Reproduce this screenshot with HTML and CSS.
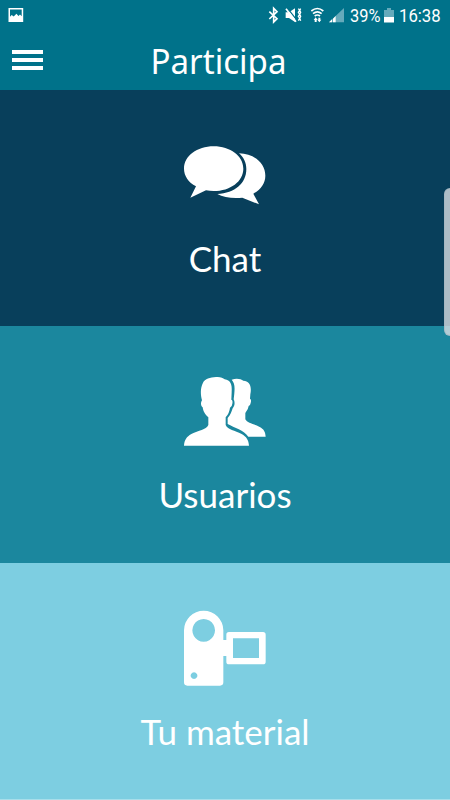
FILE: index.html
```html
<!DOCTYPE html>
<html lang="es">
<head>
<meta charset="utf-8">
<title>Participa</title>
<link rel="stylesheet" href="styles.css">
</head>
<body>
<header class="top">
  <div class="status">
    <svg class="photo" width="16" height="16" viewBox="0 0 16 16"><path fill="#fff" fill-rule="evenodd" d="M.5 1h14.700v14H.5zM2 2.500v7.200l1.700-1.600 2 1.500L8.400 6.700l2.100 2.200 1.500-1.500 1.700 1.800V2.500z"/></svg>
    <div class="indicators">
      <svg width="120" height="34" viewBox="0 0 360 102">
        <path fill="none" stroke="#fff" stroke-width="5" d="M28 35 51 56 41 66V25l10 10-23 22"/>
        <path fill="#fff" d="M77 37h10l18-12v41L87 54H77z"/>
        <path stroke="#00728a" stroke-width="4" d="m81 23 30 38"/>
        <path stroke="#fff" stroke-width="5" d="m78 26 30 39"/>
        <path fill="none" stroke="#fff" stroke-width="4" d="M115 26l4 5-4 6 4 6-4 6 4 6-4 7M122 26l-3 5 3 6-3 6 3 6-3 6 3 7"/>
        <path fill="none" stroke="#fff" stroke-width="5" d="M154 33q18-15 36 0M159 41q13-11 26 0M164 48q8-6 16 0"/>
        <path fill="#fff" d="m161 60 6-8 6 8zM172 59h12l-6 8zM164 59h6v7h-6zM175 53h6v7h-6z"/>
        <path fill="#65aabb" d="M252 24v43h-45z"/>
        <path fill="#fff" d="M207 67 216 58v9zM219 56l8-8v19h-8z"/>
      </svg>
      <span class="percent">39%</span>
      <svg class="battery" width="10" height="16" viewBox="0 0 10 16"><path fill="#65aabb" d="M3 0h4v2h3v8H0V2h3z"/><path fill="#fff" d="M0 9h10v5.500H0z"/></svg>
      <span class="clock">16:38</span>
    </div>
  </div>
  <div class="bar">
    <div class="menu"><i></i><i></i><i></i></div>
    <h1>Participa</h1>
  </div>
</header>
<main>
  <section class="tile chat">
    <svg width="110" height="80" viewBox="0 0 330 240" fill="#fff">
      <path d="M131 34C181 34 220 63 220 101S181 168 131 168Q119 168 108 166L61 188 78 154C55 142 42 122 42 101 42 63 81 34 131 34Z"/>
      <path d="M207 55C253 56 286 85 286 122 286 145 272 164 250 176L267 208 217 188C188 190 160 188 142 177 195 174 229 145 229 102 229 83 221 67 207 55Z"/>
    </svg>
    <h2>Chat</h2>
  </section>
  <section class="tile users">
    <svg width="110" height="90" viewBox="0 0 330 270" fill="#fff">
      <path d="M138 36C151 35 159 38 164 43 181 46 187 57 185 82L184 104Q189 106 187 116 186 126 180 128 178 145 167 157V180C174 195 194 196 215 207 229 215 236 225 237 242H42C43 225 50 215 64 207 86 196 108 195 115 180V157C103 146 100 139 98 127 93 124 91 113 96 106 92 90 90 70 99 53 105 41 120 37 138 36Z"/>
      <path d="M185 44C198 39 213 41 220 47 238 48 246 62 241 88L240 101Q245 103 242 114 241 121 236 123 235 133 226 144V163C232 175 251 176 269 186 281 192 286 200 287 215H235C222 196 193 188 173 177V159C182 150 185 138 188 130 195 122 195 110 191 103 194 75 197 57 185 44Z"/>
    </svg>
    <h2>Usuarios</h2>
  </section>
  <section class="tile material">
    <svg width="110" height="95" viewBox="0 0 330 285" fill="#fff" fill-rule="evenodd">
      <path d="M101 32A59 59 0 0 1 160 91V120H169V104Q169 96 177 96H279Q287 96 287 104V185Q287 193 279 193H177Q169 193 169 185V168H160V247Q160 257 150 257H52Q42 257 42 247V91A59 59 0 0 1 101 32ZM101 57a34 34 0 1 0 .1 0ZM72 217a10 10 0 1 0 .1 0ZM189 115V174H267V115Z"/>
    </svg>
    <h2>Tu material</h2>
  </section>
</main>
<div class="edge"></div>
</body>
</html>
```
FILE: styles.css
```css
* { box-sizing: border-box; }
body { margin: 0; width: 450px; height: 800px; overflow: hidden; position: relative; background: #a8deea; color: #fff; }
svg { display: block; flex: none; }
h1, h2 { margin: 0; font-weight: 400; white-space: nowrap; }
.top { height: 90px; background: #00728a; }
.status { height: 34px; display: flex; justify-content: space-between; padding-left: 8px; }
.photo { margin-top: 7px; }
.indicators { display: flex; width: 190px; font: 18px/32px Roboto, sans-serif; }
.indicators svg:first-child { margin-right: -30px; }
.percent { width: 34px; transform: scaleX(.91); transform-origin: left; }
.battery { margin-top: 8px; }
.clock { margin-left: 5px; transform: scaleX(.93); transform-origin: left; }
.bar { height: 56px; display: grid; grid-template-columns: 62px 1fr 75px; }
.menu { display: flex; flex-direction: column; gap: 4px; padding: 16px 0 0 12px; }
.menu i { width: 31px; height: 4px; background: #fff; }
h1 { font: 400 35px/54px "Noto Sans", sans-serif; text-align: center; transform: scaleX(.945); }
.tile { height: 236px; display: flex; flex-direction: column; align-items: center; }
.chat { background: #083f5b; padding-top: 45px; }
.users { background: #1b879e; padding-top: 39px; height: 236.500px; }
.material { background: #7dcee1; padding-top: 37.500px; }
h2 { font: 400 35px/44px Lato, sans-serif; }
.chat h2 { margin-top: 21px; }
.users h2 { margin-top: 17px; }
.material h2 { margin-top: 14px; }
.edge { position: absolute; left: 444px; top: 188px; width: 12px; height: 148px; border-radius: 6px; background: rgba(220, 224, 230, .78); border: 1px solid rgba(160, 180, 190, .6); }
```
